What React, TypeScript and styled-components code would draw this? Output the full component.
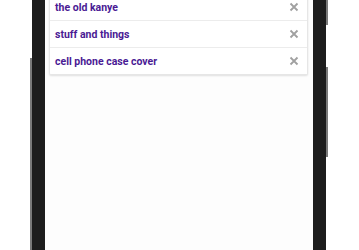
import React from "react";
import styled, { createGlobalStyle } from "styled-components";

const Global = createGlobalStyle`
  html, body { margin: 0; padding: 0; background: #ffffff; }
  #root { width: 359px; height: 250px; overflow: hidden; }
`;

const Page = styled.div`
  display: flex;
  width: 359px;
  height: 250px;
  background: #ffffff;
`;

const Gutter = styled.div<{ $w: number }>`
  width: ${(p) => p.$w}px;
  flex: none;
`;

const Bezel = styled.div`
  display: flex;
  flex-direction: column;
  flex: none;
`;

const BezelSeg = styled.div<{ $h?: number; $w: number; $edge: "left" | "right"; $light: boolean }>`
  width: ${(p) => p.$w}px;
  ${(p) => (p.$h ? `height: ${p.$h}px; flex: none;` : "flex: 1;")}
  background: #1d1d1d;
  box-sizing: border-box;
  ${(p) =>
    p.$light
      ? `border-${p.$edge}: 2px solid #7a7a7a;`
      : `border-${p.$edge}: 2px solid #ffffff;`}
`;

const Screen = styled.div`
  width: 268px;
  flex: none;
  background: #fdfdfd;
  padding: 0 5px 0 4px;
  box-sizing: border-box;
`;

const Card = styled.div`
  margin-top: -6px;
  background: #ffffff;
  border: 1px solid #e6e6e6;
  border-top: none;
  border-radius: 0 0 2px 2px;
  box-shadow: 0 1px 2px rgba(0, 0, 0, 0.12);
`;

const Row = styled.div<{ $last?: boolean }>`
  display: flex;
  align-items: center;
  height: 26px;
  padding: 0 8px 0 5px;
  border-bottom: ${(p) => (p.$last ? "none" : "1px solid #ececec")};
`;

const Label = styled.span`
  flex: 1;
  font-family: Roboto, "Liberation Sans", sans-serif;
  font-weight: 700;
  font-size: 10.5px;
  color: #4a1a94;
  letter-spacing: 0;
`;

const Close = styled.span`
  display: flex;
  width: 10px;
  height: 10px;
  color: #a0a0a0;
`;

const X = () => (
  <Close>
    <svg width="10" height="10" viewBox="0 0 10 10">
      <path d="M1.5 1.5 L8.5 8.5 M8.5 1.5 L1.5 8.5" stroke="currentColor" strokeWidth="1.8" strokeLinecap="butt" />
    </svg>
  </Close>
);

const items = ["the old kanye", "stuff and things", "cell phone case cover"];

export default function App() {
  return (
    <>
      <Global />
      <Page>
        <Gutter $w={30} />
        <Bezel>
          <BezelSeg $w={15} $h={58} $edge="left" $light={false} />
          <BezelSeg $w={15} $edge="left" $light={true} />
        </Bezel>
        <Screen>
          <Card>
            {items.map((t, i) => (
              <Row key={t} $last={i === items.length - 1}>
                <Label>{t}</Label>
                <X />
              </Row>
            ))}
          </Card>
        </Screen>
        <Bezel>
          <BezelSeg $w={15} $h={25} $edge="right" $light={true} />
          <BezelSeg $w={15} $h={42} $edge="right" $light={false} />
          <BezelSeg $w={15} $h={90} $edge="right" $light={true} />
          <BezelSeg $w={15} $edge="right" $light={false} />
        </Bezel>
        <Gutter $w={31} />
      </Page>
    </>
  );
}
